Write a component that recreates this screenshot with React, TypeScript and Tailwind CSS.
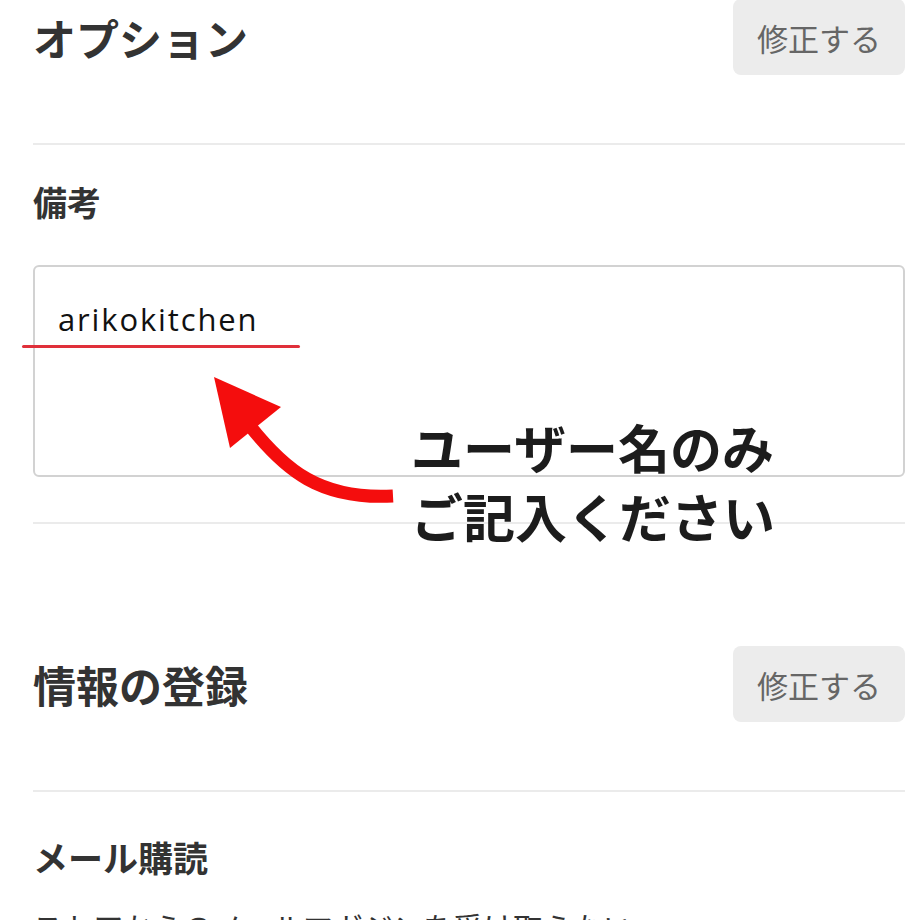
import React from 'react';

const jp = '"Noto Sans CJK JP", "Noto Sans", sans-serif';

function EditButton() {
  return (
    <button
      className="w-[172px] h-[76px] rounded-[8px] bg-[#ececec] text-[#666666] text-[31px] leading-none"
      style={{fontFamily: jp}}
    >
      修正する
    </button>
  );
}

function Divider({className}: {className?: string}) {
  return <div className={`h-[2px] bg-[#ebebeb] ${className ?? ''}`} />;
}

export default function App() {
  return (
    <div
      className="relative w-[920px] h-[920px] overflow-hidden bg-white pl-[33px] pr-[15px] text-[#333333]"
      style={{fontFamily: jp}}
    >
      <div className="flex items-center justify-between h-[76px] -mt-[1px]">
        <h2 className="text-[43px] font-bold leading-none">オプション</h2>
        <EditButton />
      </div>
      <Divider className="mt-[68px]" />

      <div className="mt-[40px] text-[34px] font-bold leading-none">備考</div>
      <div className="mt-[46px] h-[212px] border-2 border-[#d2d2d2] rounded-[6px] pl-[23px] pt-[37px]">
        <span
          className="text-[31px] leading-[31px] tracking-[0.06em] text-[#111111]"
          style={{fontFamily: '"Open Sans", "Liberation Sans", sans-serif'}}
        >
          arikokitchen
        </span>
      </div>
      <Divider className="mt-[45px]" />

      <div className="flex items-center justify-between h-[76px] mt-[122px]">
        <h2 className="text-[43px] font-bold leading-none">情報の登録</h2>
        <EditButton />
      </div>
      <Divider className="mt-[68px]" />

      <div className="mt-[47px] text-[35px] font-bold leading-none">メール購読</div>
      <p className="mt-[37px] text-[30px] leading-none whitespace-nowrap">
        ストアからのメールマガジンを受け取らない
      </p>

      {/* red annotation */}
      <div className="absolute left-[22px] top-[345px] w-[278px] h-[3px] bg-[#e0303a] rounded-full" />
      <svg
        className="absolute left-0 top-0 pointer-events-none"
        width={920}
        height={920}
        viewBox="0 0 920 920"
      >
        <path
          d="M 250 426 C 285 470, 320 500, 393 496"
          fill="none"
          stroke="#f40d0d"
          strokeWidth={13}
        />
        <polygon points="214,377 281,407 230,448" fill="#f40d0d" />
      </svg>
      <div
        className="absolute left-[411px] top-[412px] text-[52px] leading-[69px] font-bold text-[#1c1c1c] whitespace-nowrap"
        style={{fontFamily: jp}}
      >
        <div>ユーザー名のみ</div>
        <div>ご記入ください</div>
      </div>
    </div>
  );
}
